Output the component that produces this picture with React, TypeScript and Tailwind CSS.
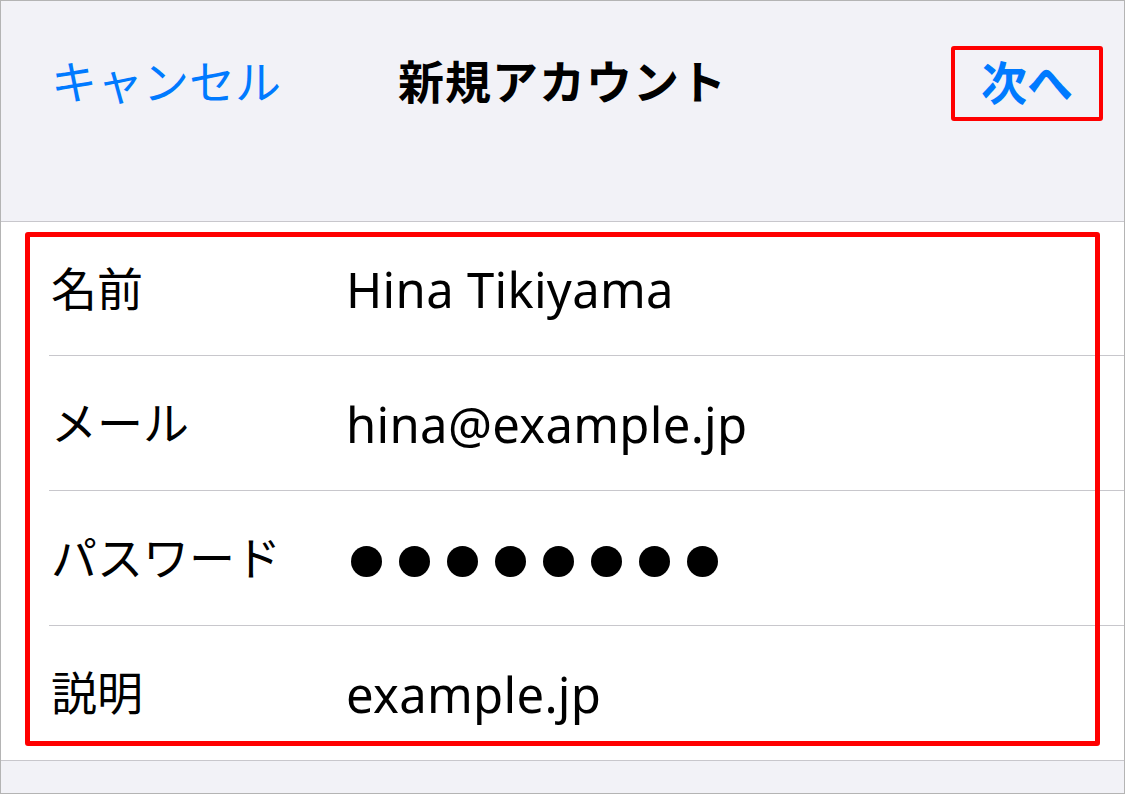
const rows = [
  { label: "名前", value: "Hina Tikiyama" },
  { label: "メール", value: "hina@example.jp" },
  { label: "パスワード", value: null },
  { label: "説明", value: "example.jp" },
];

function PasswordDots() {
  return (
    <div className="flex items-center gap-[17px] pl-[5px] pt-[6px]">
      {Array.from({ length: 8 }).map((_, i) => (
        <span key={i} className="block w-[31px] h-[31px] rounded-full bg-black" />
      ))}
    </div>
  );
}

export default function App() {
  return (
    <div
      className="w-[1125px] h-[794px] border border-[#b4b4b4] bg-[#f2f2f7] flex flex-col overflow-hidden"
      style={{ fontFamily: '"Noto Sans", "Noto Sans CJK JP", sans-serif' }}
    >
      {/* nav bar */}
      <header className="h-[221px] shrink-0 border-b border-[#c8c7cc] pt-[45px] px-[21px]">
        <div className="grid grid-cols-[1fr_auto_1fr] items-center h-[75px]">
          <button className="justify-self-start ml-[29px] -mt-[6px] text-[46px] leading-none text-[#007aff]">
            キャンセル
          </button>
          <h1 className="-mt-[6px] text-[46px] leading-none font-bold tracking-[1px] text-black">新規アカウント</h1>
          <button className="justify-self-end h-[75px] px-[26px] border-4 border-[#ff0000] rounded-[3px] text-[46px] leading-none font-bold text-[#007aff]">
            <span className="block -mt-[4px]">次へ</span>
          </button>
        </div>
      </header>

      {/* form */}
      <section className="relative bg-white border-b border-[#c8c7cc]">
        {rows.map((row, i) => (
          <div key={row.label} className="pl-[48px]">
            <div
              className={
                i < rows.length - 1
                  ? "flex items-center border-b border-[#c8c7cc] " + (i === 0 ? "h-[134px]" : "h-[135px]")
                  : "flex items-center h-[134px]"
              }
            >
              <span className="w-[297px] shrink-0 pl-[2px] -mt-[2px] text-[46px] leading-none text-black">
                {row.label}
              </span>
              {row.value ? (
                <span className="pt-[2px] text-[49px] tracking-[0.3px] leading-none text-black">{row.value}</span>
              ) : (
                <PasswordDots />
              )}
            </div>
          </div>
        ))}
        {/* annotation box */}
        <div className="absolute left-[24px] top-[10px] w-[1075px] h-[514px] border-[5px] border-[#ff0000] rounded-[3px] pointer-events-none" />
      </section>

      <div className="flex-1" />
    </div>
  );
}
